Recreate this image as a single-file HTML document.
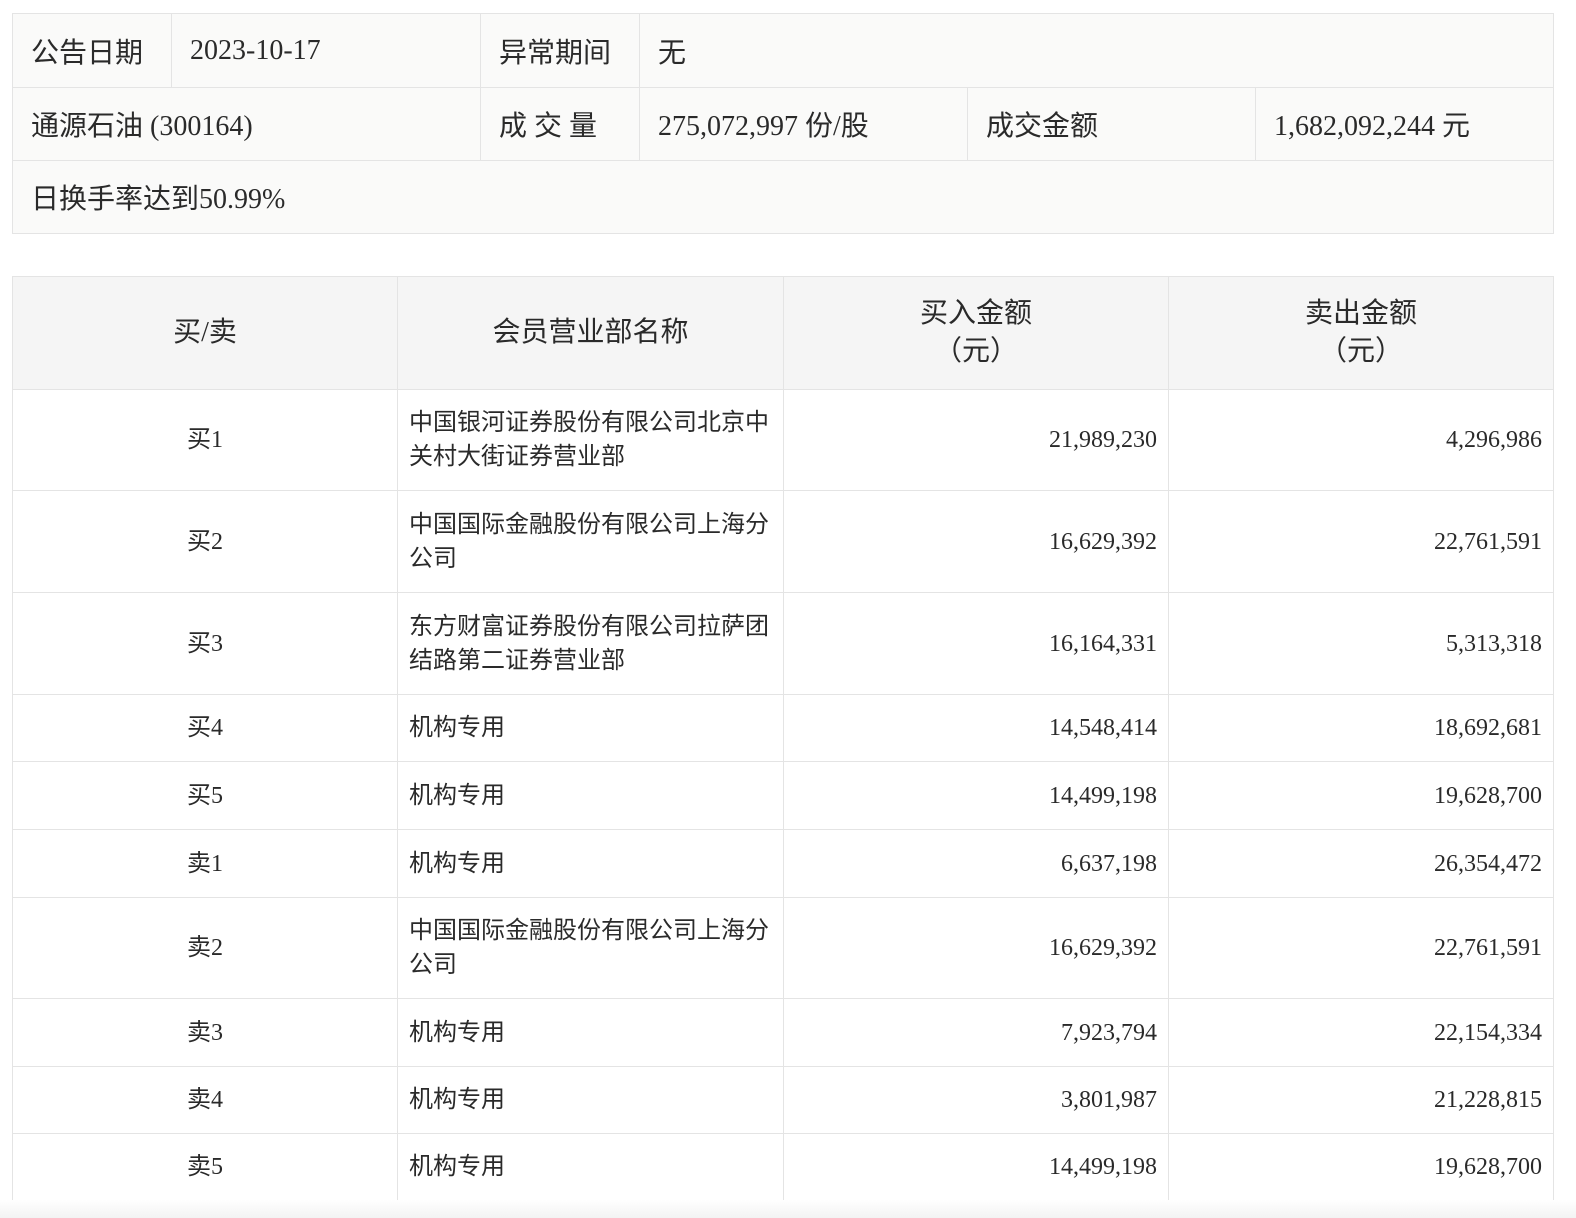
<!DOCTYPE html>
<html><head><meta charset="utf-8"><style>
*{margin:0;padding:0;box-sizing:border-box}
body{width:1576px;height:1218px;background:#fff;font-family:"Liberation Serif","Noto Sans CJK SC",serif;color:#2a2a2a;position:relative;overflow:hidden}
.c{position:absolute;display:flex;align-items:center;border:1px solid #e4e4e4}
.t{background:#fafaf9;font-size:28px;padding-left:18px}
.h{background:#f5f5f5;font-size:28px;justify-content:center;text-align:center;line-height:38px}
.b{background:#fff;font-size:24px;line-height:34px}
.ctr{justify-content:center}
.l{padding-left:11px;padding-right:8px}
.r{justify-content:flex-end;padding-right:11px}
.foot{position:absolute;left:0;top:1200px;width:1576px;height:18px;background:linear-gradient(#fff,#f3f3f3)}
</style></head><body>
<div class="c t" style="left:12px;top:13px;width:160px;height:75px">公告日期</div>
<div class="c t" style="left:171px;top:13px;width:310px;height:75px">2023-10-17</div>
<div class="c t" style="left:480px;top:13px;width:160px;height:75px">异常期间</div>
<div class="c t" style="left:639px;top:13px;width:915px;height:75px">无</div>
<div class="c t" style="left:12px;top:87px;width:469px;height:74px">通源石油 (300164)</div>
<div class="c t" style="left:480px;top:87px;width:160px;height:74px">成 交 量</div>
<div class="c t" style="left:639px;top:87px;width:329px;height:74px">275,072,997 份/股</div>
<div class="c t" style="left:967px;top:87px;width:289px;height:74px">成交金额</div>
<div class="c t" style="left:1255px;top:87px;width:299px;height:74px">1,682,092,244 元</div>
<div class="c t" style="left:12px;top:160px;width:1542px;height:74px">日换手率达到50.99%</div>

<div class="c h" style="left:12px;top:276px;width:386px;height:114px">买/卖</div>
<div class="c h" style="left:397px;top:276px;width:387px;height:114px">会员营业部名称</div>
<div class="c h" style="left:783px;top:276px;width:386px;height:114px">买入金额<br>（元）</div>
<div class="c h" style="left:1168px;top:276px;width:386px;height:114px">卖出金额<br>（元）</div>

<div class="c b ctr" style="left:12px;top:389px;width:386px;height:102px">买1</div>
<div class="c b l" style="left:397px;top:389px;width:387px;height:102px">中国银河证券股份有限公司北京中关村大街证券营业部</div>
<div class="c b r" style="left:783px;top:389px;width:386px;height:102px">21,989,230</div>
<div class="c b r" style="left:1168px;top:389px;width:386px;height:102px">4,296,986</div>

<div class="c b ctr" style="left:12px;top:490px;width:386px;height:103px">买2</div>
<div class="c b l" style="left:397px;top:490px;width:387px;height:103px">中国国际金融股份有限公司上海分公司</div>
<div class="c b r" style="left:783px;top:490px;width:386px;height:103px">16,629,392</div>
<div class="c b r" style="left:1168px;top:490px;width:386px;height:103px">22,761,591</div>

<div class="c b ctr" style="left:12px;top:592px;width:386px;height:103px">买3</div>
<div class="c b l" style="left:397px;top:592px;width:387px;height:103px">东方财富证券股份有限公司拉萨团结路第二证券营业部</div>
<div class="c b r" style="left:783px;top:592px;width:386px;height:103px">16,164,331</div>
<div class="c b r" style="left:1168px;top:592px;width:386px;height:103px">5,313,318</div>

<div class="c b ctr" style="left:12px;top:694px;width:386px;height:68px">买4</div>
<div class="c b l" style="left:397px;top:694px;width:387px;height:68px">机构专用</div>
<div class="c b r" style="left:783px;top:694px;width:386px;height:68px">14,548,414</div>
<div class="c b r" style="left:1168px;top:694px;width:386px;height:68px">18,692,681</div>

<div class="c b ctr" style="left:12px;top:761px;width:386px;height:69px">买5</div>
<div class="c b l" style="left:397px;top:761px;width:387px;height:69px">机构专用</div>
<div class="c b r" style="left:783px;top:761px;width:386px;height:69px">14,499,198</div>
<div class="c b r" style="left:1168px;top:761px;width:386px;height:69px">19,628,700</div>

<div class="c b ctr" style="left:12px;top:829px;width:386px;height:69px">卖1</div>
<div class="c b l" style="left:397px;top:829px;width:387px;height:69px">机构专用</div>
<div class="c b r" style="left:783px;top:829px;width:386px;height:69px">6,637,198</div>
<div class="c b r" style="left:1168px;top:829px;width:386px;height:69px">26,354,472</div>

<div class="c b ctr" style="left:12px;top:897px;width:386px;height:102px">卖2</div>
<div class="c b l" style="left:397px;top:897px;width:387px;height:102px">中国国际金融股份有限公司上海分公司</div>
<div class="c b r" style="left:783px;top:897px;width:386px;height:102px">16,629,392</div>
<div class="c b r" style="left:1168px;top:897px;width:386px;height:102px">22,761,591</div>

<div class="c b ctr" style="left:12px;top:998px;width:386px;height:69px">卖3</div>
<div class="c b l" style="left:397px;top:998px;width:387px;height:69px">机构专用</div>
<div class="c b r" style="left:783px;top:998px;width:386px;height:69px">7,923,794</div>
<div class="c b r" style="left:1168px;top:998px;width:386px;height:69px">22,154,334</div>

<div class="c b ctr" style="left:12px;top:1066px;width:386px;height:68px">卖4</div>
<div class="c b l" style="left:397px;top:1066px;width:387px;height:68px">机构专用</div>
<div class="c b r" style="left:783px;top:1066px;width:386px;height:68px">3,801,987</div>
<div class="c b r" style="left:1168px;top:1066px;width:386px;height:68px">21,228,815</div>

<div class="c b ctr" style="left:12px;top:1133px;width:386px;height:68px">卖5</div>
<div class="c b l" style="left:397px;top:1133px;width:387px;height:68px">机构专用</div>
<div class="c b r" style="left:783px;top:1133px;width:386px;height:68px">14,499,198</div>
<div class="c b r" style="left:1168px;top:1133px;width:386px;height:68px">19,628,700</div>
<div class="foot"></div>
</body></html>
